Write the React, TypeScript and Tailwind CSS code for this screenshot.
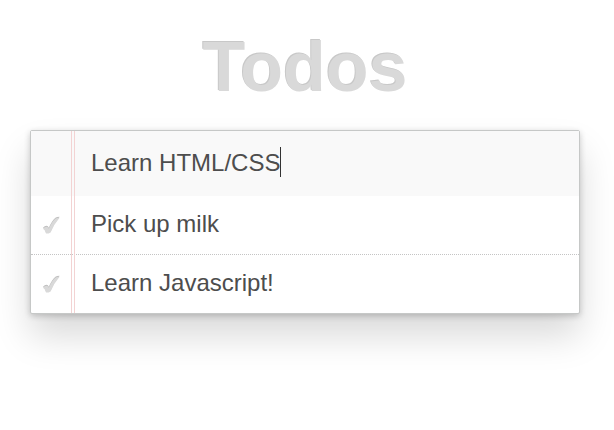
import { useState } from "react";

type Todo = { id: string; text: string };

const todos: Todo[] = [
  { id: "milk", text: "Pick up milk" },
  { id: "javascript", text: "Learn Javascript!" },
];

const tickPath =
  "M2 11.8 Q3.6 9.8 5.6 9.8 Q7 9.8 7.8 11.8 Q10.8 5 14.4 1.8 Q15.8 0.8 18.6 0.8 Q13.2 7 9.6 15.4 Q8 16.6 5 16.6 Q4.2 13 2 11.8Z";

function Check() {
  return (
    <svg viewBox="0 0 20 20" className="size-5" aria-hidden="true">
      <path d={tickPath} fill="#bfbfbf" />
      <path d={tickPath} fill="#d9d9d9" transform="translate(0 1)" />
    </svg>
  );
}

function TodoRow({ todo }: { todo: Todo }) {
  return (
    <li className="flex items-end border-b border-dotted border-[#c4c4c4] last:border-b-0">
      <span className="relative flex h-14 w-10 shrink-0 items-center justify-center">
        <input
          id={todo.id}
          type="checkbox"
          className="absolute inset-0 cursor-pointer appearance-none"
        />
        <Check />
      </span>
      <label htmlFor={todo.id} className="grow pt-3.5 pb-4 pl-5 text-2xl leading-7">
        {todo.text}
      </label>
    </li>
  );
}

export default function App() {
  const [draft, setDraft] = useState("Learn HTML/CSS");

  return (
    <main className="bg-white pt-[27px] pr-[34px] pb-28 pl-[30px] font-['Liberation_Sans',Arial,sans-serif] text-[#4d4d4d]">
      <h1 className="text-center text-[70px] leading-20 font-bold text-[#d9d9d9] [text-shadow:-1px_-1px_0_#c8c8c8]">
        Todos
      </h1>
      <section className="relative mt-[23px] rounded-[2px] border border-[#c6c8c7] bg-white shadow-[0_2px_6px_0_rgba(0,0,0,0.2),0_22px_36px_0_rgba(0,0,0,0.15)]">
        <div className="pointer-events-none absolute inset-y-0 left-10 z-10 w-1 border-x border-[#f3d3d3]" />
        <form
          className="flex h-[65px] items-center bg-[#f9f9f9] pb-[3px] pl-[60px]"
          onSubmit={(event) => event.preventDefault()}
        >
          <input
            type="text"
            aria-label="What needs to be done?"
            value={draft}
            onChange={(event) => setDraft(event.target.value)}
            className="field-sizing-content max-w-full bg-transparent pt-0.5 text-2xl leading-7 caret-transparent outline-none"
          />
          <span className="h-[30px] w-px bg-[#333333]" />
        </form>
        <ul>
          {todos.map((todo) => (
            <TodoRow key={todo.id} todo={todo} />
          ))}
        </ul>
      </section>
    </main>
  );
}
